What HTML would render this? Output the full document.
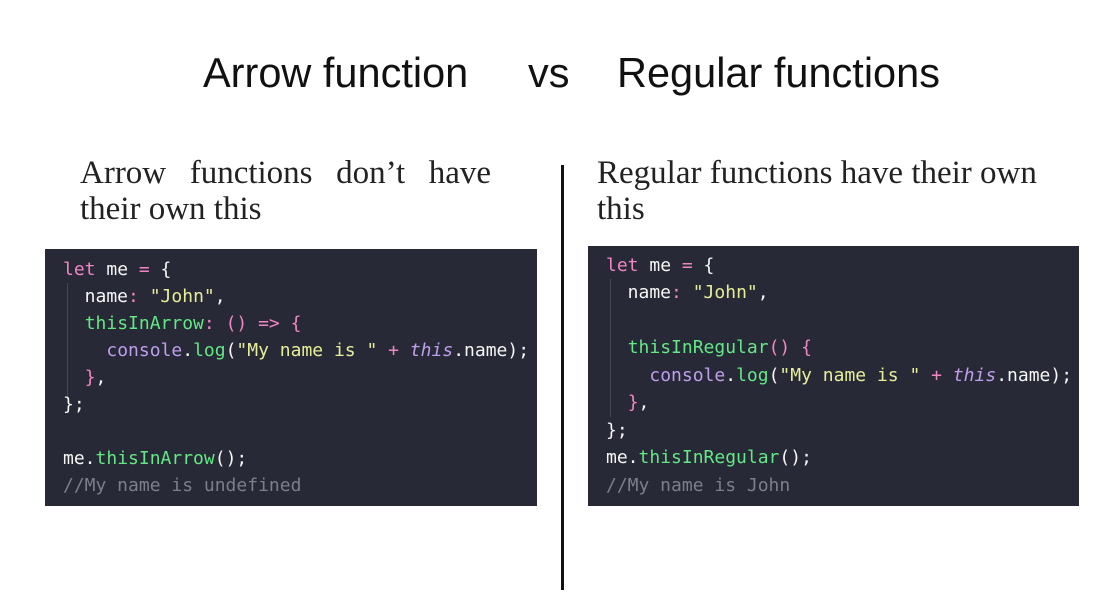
<!DOCTYPE html>
<html><head><style>
body{margin:0;width:1102px;height:608px;background:#fff;position:relative;overflow:hidden;font-family:"Liberation Sans",sans-serif}
.t{position:absolute;top:48px;font-size:41.5px;color:#111;white-space:nowrap;line-height:50px}
.s{position:absolute;font-family:"Liberation Serif",serif;font-size:33px;color:#222;line-height:36px;white-space:nowrap}
.code{position:absolute;background:#282936;font-family:"DejaVu Sans Mono",monospace;font-size:18px;color:#f6f6f4;white-space:pre}
.l{position:absolute;left:18px;height:27px;line-height:27px}
.k{color:#f286c4}.g{color:#62e884}.y{color:#e7ee98}.p{color:#bf9eee}.i{color:#bf9eee;font-style:italic}.c{color:#7b7f8b}
.guide{position:absolute;left:22px;width:1px;background:#44475a}
</style></head><body>
<div class="t" style="left:203px">Arrow function</div>
<div class="t" style="left:528px">vs</div>
<div class="t" style="left:617px">Regular functions</div>
<div class="s" style="left:80px;top:155px;width:411px;display:flex;justify-content:space-between"><span>Arrow</span><span>functions</span><span>don’t</span><span>have</span></div>
<div class="s" style="left:80px;top:191px">their own this</div>
<div class="s" style="left:597px;top:155px">Regular functions have their own</div>
<div class="s" style="left:597px;top:191px">this</div>
<div style="position:absolute;left:561px;top:165px;width:3px;height:425px;background:#111"></div>

<div class="code" style="left:45px;top:249px;width:492px;height:257px">
<div class="guide" style="top:34px;height:115px"></div>
<div class="l" style="top:7px"><span class="k">let</span> me <span class="k">=</span> {</div>
<div class="l" style="top:34px">  name<span class="k">:</span> <span class="y">"John"</span>,</div>
<div class="l" style="top:61px">  <span class="g">thisInArrow</span><span class="k">: () =&gt; {</span></div>
<div class="l" style="top:88px">    <span class="p">console</span>.<span class="g">log</span>(<span class="y">"My name is "</span> <span class="k">+</span> <span class="i">this</span>.name);</div>
<div class="l" style="top:115px">  <span class="k">}</span>,</div>
<div class="l" style="top:142px">};</div>
<div class="l" style="top:196px">me.<span class="g">thisInArrow</span>();</div>
<div class="l" style="top:223px"><span class="c">//My name is undefined</span></div>
</div>

<div class="code" style="left:588px;top:246px;width:491px;height:260px">
<div class="guide" style="top:33px;height:138px"></div>
<div class="l" style="top:6px"><span class="k">let</span> me <span class="k">=</span> {</div>
<div class="l" style="top:33px">  name<span class="k">:</span> <span class="y">"John"</span>,</div>
<div class="l" style="top:88px">  <span class="g">thisInRegular</span><span class="k">() {</span></div>
<div class="l" style="top:116px">    <span class="p">console</span>.<span class="g">log</span>(<span class="y">"My name is "</span> <span class="k">+</span> <span class="i">this</span>.name);</div>
<div class="l" style="top:143px">  <span class="k">}</span>,</div>
<div class="l" style="top:171px">};</div>
<div class="l" style="top:198px">me.<span class="g">thisInRegular</span>();</div>
<div class="l" style="top:226px"><span class="c">//My name is John</span></div>
</div>
</body></html>
